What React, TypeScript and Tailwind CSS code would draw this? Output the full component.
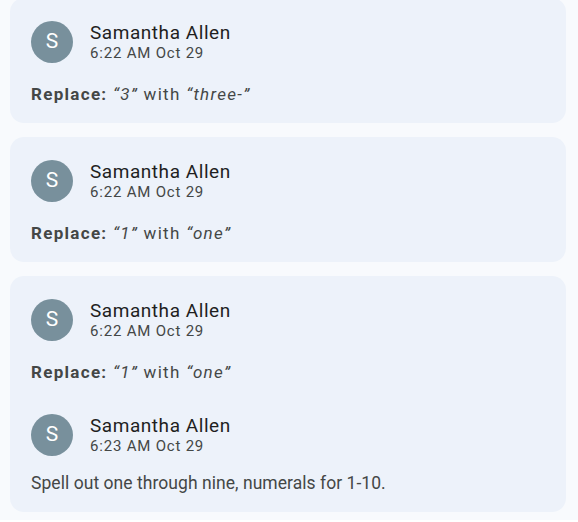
import React from 'react'

const Avatar = () => (
  <div className="w-[42px] h-[42px] shrink-0 rounded-full bg-[#78909c] flex items-center justify-center text-white text-[21px]">
    S
  </div>
)

const Header = ({ time }: { time: string }) => (
  <div className="flex items-center gap-[17px]">
    <Avatar />
    <div className="flex flex-col">
      <span className="text-[19px] leading-[22px] tracking-[0.55px] text-[#1f1f1f]">Samantha Allen</span>
      <span className="text-[15px] leading-[19px] tracking-[0.8px] text-[#444746]">{time}</span>
    </div>
  </div>
)

const Replace = ({ from, to }: { from: string; to: string }) => (
  <p className="mt-[19px] text-[17px] leading-[24px] tracking-[1.3px] text-[#444746]">
    <span className="font-bold">Replace:</span> <i>“{from}”</i> with <i>“{to}”</i>
  </p>
)

const Card = ({ children, className = '' }: { children: React.ReactNode; className?: string }) => (
  <div className={`rounded-[14px] bg-[#edf2fa] px-[21px] pt-[23px] ${className}`}>{children}</div>
)

export default function App() {
  return (
    <div
      className="min-h-screen bg-[#f8fafd] pl-[10px] pr-[12px] text-[#1f1f1f]"
      style={{ fontFamily: 'Roboto, "Noto Sans", sans-serif' }}
    >
      <div className="-mt-[2px] flex flex-col gap-[14px]">
        <Card className="pb-[17px]">
          <Header time="6:22 AM Oct 29" />
          <Replace from="3" to="three-" />
        </Card>

        <Card className="pb-[17px]">
          <Header time="6:22 AM Oct 29" />
          <Replace from="1" to="one" />
        </Card>

        <Card className="pb-[16px]">
          <Header time="6:22 AM Oct 29" />
          <Replace from="1" to="one" />
          <div className="mt-[30px]">
            <Header time="6:23 AM Oct 29" />
            <p className="mt-[14px] text-[17.5px] leading-[26px] tracking-[0.05px] text-[#444746]">
              Spell out one through nine, numerals for 1-10.
            </p>
          </div>
        </Card>
      </div>
    </div>
  )
}
